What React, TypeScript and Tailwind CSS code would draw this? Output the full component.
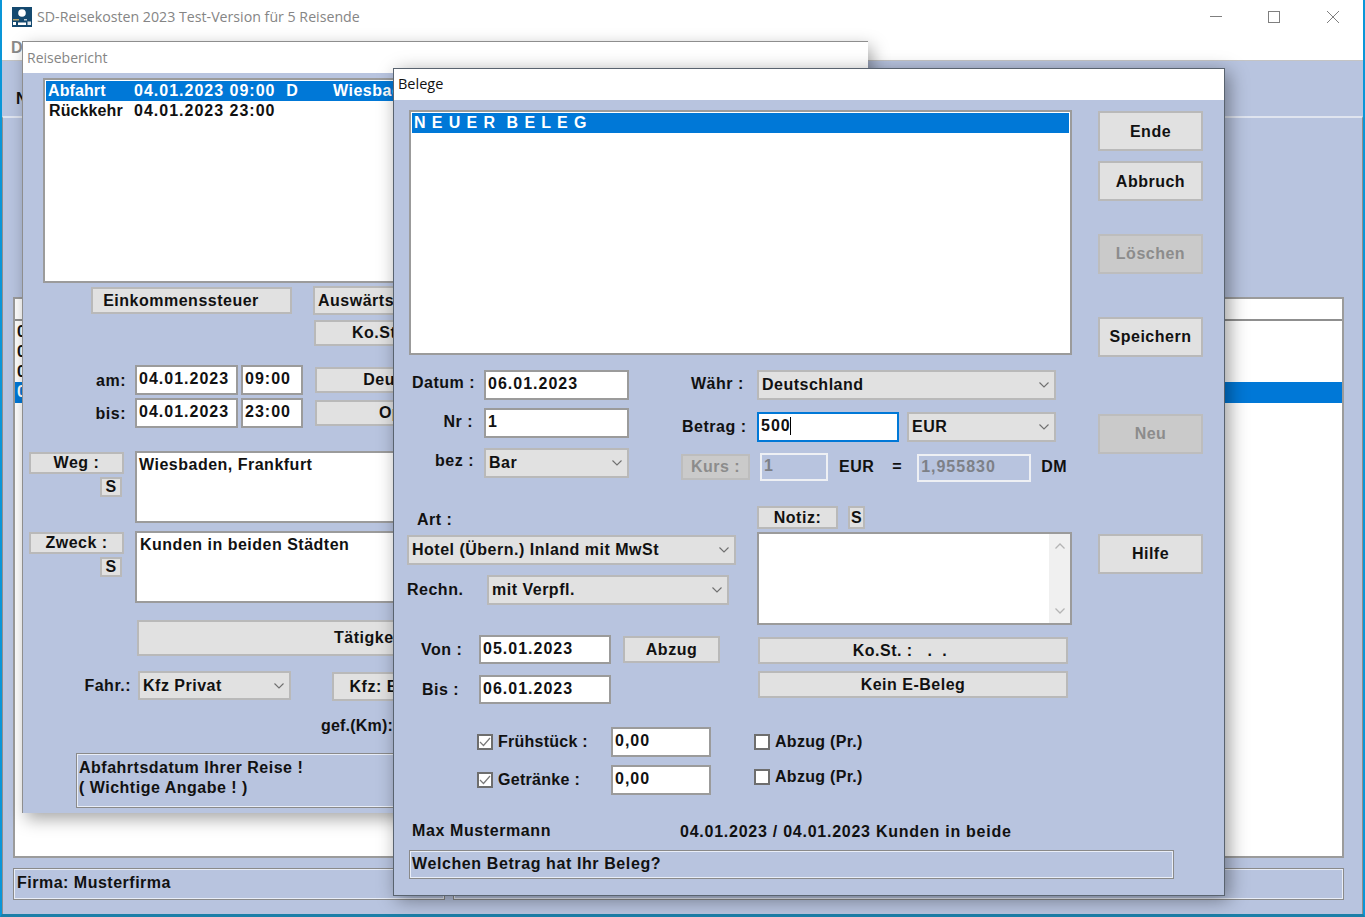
import React from 'react';
import clsx from 'clsx';

const Btn = ({ label, className, disabled, left }: { label: string; className?: string; disabled?: boolean; left?: boolean }) => (
  <button
    className={clsx(
      'flex shrink-0 items-center whitespace-pre border-2',
      left ? 'justify-start pl-[3px]' : 'justify-center',
      disabled ? 'border-[#bdbdbd] bg-[#cacaca] text-[#8c8c8c]' : 'border-[#b9b9b9] bg-[#e1e1e1] text-[#111]',
      className,
    )}
  >
    {label}
  </button>
);

const Field = ({ value, className, caret, disabled }: { value?: string; className?: string; caret?: boolean; disabled?: boolean }) => (
  <div
    className={clsx(
      'flex shrink-0 items-center whitespace-nowrap border-2 px-[2px] pb-[2px] tracking-[1px]',
      caret ? 'border-[#0078d7] bg-white' : disabled ? 'border-[#eef0f4] bg-[#b8c4df] text-[#7d8087]' : 'border-[#9b9b9b] bg-white',
      className,
    )}
  >
    {value}
    {caret && <span className="ml-[-1px] h-[18px] w-px bg-black" />}
  </div>
);

const Chevron = () => (
  <svg width="10" height="6" viewBox="0 0 10 6" fill="none" className="shrink-0">
    <path d="M0.5 0.5 L5 5 L9.5 0.5" stroke="#6f6f6f" strokeWidth="1.1" />
  </svg>
);

const Dropdown = ({ value, className }: { value: string; className?: string }) => (
  <div className={clsx('flex shrink-0 items-center justify-between whitespace-nowrap border-2 border-[#b9b9b9] bg-[#e1e1e1] pl-[3px] pr-[5px]', className)}>
    <span>{value}</span>
    <Chevron />
  </div>
);

const Check = ({ checked }: { checked?: boolean }) => (
  <div className="flex h-[16px] w-[16px] shrink-0 items-center justify-center border-2 border-[#6e6e6e] bg-white">
    {checked && (
      <svg width="12" height="10" viewBox="0 0 12 10" fill="none">
        <path d="M1 5 L4.5 8.5 L11 1" stroke="#7a7a7a" strokeWidth="1.2" />
      </svg>
    )}
  </div>
);

const StatusBox = ({ children, className }: { children: React.ReactNode; className?: string }) => (
  <div className={clsx('border border-[#8a8a8a] px-[2px] shadow-[inset_0_0_0_1px_#e9eef8]', className)}>{children}</div>
);

const WinTitle = ({ label, active }: { label: string; active?: boolean }) => (
  <div
    className={clsx(
      "flex h-[31px] shrink-0 items-center bg-white px-[4px] font-['Open_Sans',sans-serif] font-normal tracking-normal",
      active ? 'pb-[2px] text-[14.5px] text-[#111]' : 'text-[14px] text-[#858585]',
    )}
  >
    {label}
  </div>
);

const Logo = () => (
  <svg width="20" height="20" viewBox="0 0 20 20" className="shrink-0">
    <rect width="20" height="20" fill="#14496f" />
    <circle cx="10" cy="6" r="3.8" fill="#fff" />
    <rect x="1" y="12" width="6" height="1.5" fill="#b9a66a" />
    <rect x="12" y="12" width="3" height="1.5" fill="#b9c7d2" />
    <rect x="1" y="15" width="3" height="3" fill="#fff" />
    <rect x="6" y="15.5" width="8" height="2.5" fill="#fff" />
    <rect x="15.5" y="14.5" width="3.5" height="3.5" fill="#dfe6ec" />
  </svg>
);

const Reisebericht = () => (
  <div className="absolute left-[22px] top-[41px] flex h-[772px] w-[846px] flex-col border-l border-t border-[#8e8e8e] bg-[#b8c4df] shadow-[4px_6px_16px_rgba(0,0,0,0.35)]">
    <WinTitle label="Reisebericht" />
    <div className="flex flex-col pl-[20px] pt-[5px]">
      <div className="h-[205px] w-[780px] shrink-0 border-2 border-[#9b9b9b] bg-white p-[1px] leading-[20px]">
        <div className="flex h-[20px] whitespace-pre bg-[#0078d7] pl-[2px] text-white">
          <span className="w-[86px] tracking-[0.1px]">Abfahrt</span>
          <span className="w-[199px] tracking-[1px]">04.01.2023 09:00  D</span>
          <span className="tracking-[0.5px]">Wiesbaden, Frankfurt</span>
        </div>
        <div className="flex h-[20px] whitespace-pre pl-[3px]">
          <span className="w-[85px] tracking-[0.1px]">Rückkehr</span>
          <span className="tracking-[1px]">04.01.2023 23:00</span>
        </div>
      </div>

      <div className="mt-[3px] flex items-start">
        <Btn label="Einkommenssteuer" className="ml-[48px] mt-[1px] h-[27px] w-[201px] pr-[21px]" />
        <Btn label="Auswärtstätigkeit" left className="ml-[21px] h-[29px] w-[200px]" />
      </div>
      <Btn label="Ko.St. :" className="ml-[271px] mt-[5px] h-[26px] w-[136px]" />

      <div className="mt-[19px] flex items-start">
        <span className="flex h-[30px] w-[83px] items-center justify-end pt-[2px]">am:</span>
        <Field value="04.01.2023" className="ml-[9px] h-[30px] w-[103px]" />
        <Field value="09:00" className="ml-[3px] h-[30px] w-[62px]" />
        <Btn label="Deutschland" className="ml-[12px] mt-[2px] h-[26px] w-[198px]" />
      </div>
      <div className="mt-[3px] flex items-start">
        <span className="flex h-[30px] w-[83px] items-center justify-end pt-[2px]">bis:</span>
        <Field value="04.01.2023" className="ml-[9px] h-[30px] w-[103px]" />
        <Field value="23:00" className="ml-[3px] h-[30px] w-[62px]" />
        <Btn label="Optionen" className="ml-[12px] mt-[2px] h-[26px] w-[202px]" />
      </div>

      <div className="mt-[23px] flex items-start">
        <div className="ml-[-14px] flex w-[95px] flex-col items-end pt-[1px]">
          <Btn label="Weg :" className="h-[22px] w-[95px]" />
          <Btn label="S" className="mr-[2px] mt-[3px] h-[20px] w-[22px]" />
        </div>
        <div className="ml-[11px] h-[72px] w-[500px] border-2 border-[#9b9b9b] bg-white pl-[2px] leading-[24px]">Wiesbaden, Frankfurt</div>
      </div>
      <div className="mt-[8px] flex items-start">
        <div className="ml-[-14px] flex w-[95px] flex-col items-end pt-[1px]">
          <Btn label="Zweck :" className="h-[22px] w-[95px]" />
          <Btn label="S" className="mr-[2px] mt-[3px] h-[20px] w-[22px]" />
        </div>
        <div className="ml-[11px] h-[72px] w-[500px] border-2 border-[#9b9b9b] bg-white pl-[3px] leading-[24px]">Kunden in beiden Städten</div>
      </div>

      <Btn label="Tätigkeiten" className="ml-[94px] mt-[17px] h-[36px] w-[484px]" />

      <div className="mt-[15px] flex items-start">
        <span className="flex h-[29px] w-[88px] items-center justify-end">Fahr.:</span>
        <Dropdown value="Kfz Privat" className="ml-[7px] h-[29px] w-[153px]" />
        <Btn label="Kfz: Einstellung" className="ml-[41px] mt-[1px] h-[29px] w-[164px]" />
      </div>
      <span className="ml-[278px] mt-[15px] leading-[20px] tracking-[0.2px]">gef.(Km):</span>
      <StatusBox className="ml-[33px] mt-[17px] h-[55px] w-[500px] pt-[4px] leading-[20px]">
        <div>Abfahrtsdatum Ihrer Reise !</div>
        <div>( Wichtige Angabe ! )</div>
      </StatusBox>
    </div>
  </div>
);

const Belege = () => (
  <div className="absolute left-[393px] top-[68px] flex h-[828px] w-[832px] flex-col border border-[#59636f] bg-[#b8c4df] shadow-[4px_4px_18px_rgba(0,0,0,0.4)]">
    <WinTitle label="Belege" active />
    <div className="flex flex-col pl-[15px] pt-[10px]">
      <div className="flex items-start">
        <div className="flex w-[689px] flex-col">
          <div className="h-[245px] w-[663px] shrink-0 border-2 border-[#9b9b9b] bg-white p-[1px]">
            <div className="flex h-[20px] items-center whitespace-pre bg-[#0078d7] pl-[2px] tracking-[0.9px] text-white">N E U E R  B E L E G</div>
          </div>

          <div className="mt-[15px] flex items-start whitespace-nowrap">
            <div className="flex w-[220px] flex-col">
              <div className="flex items-center justify-end gap-[9px]">
                <span className="pb-[4px]">Datum :</span>
                <Field value="06.01.2023" className="h-[30px] w-[145px]" />
              </div>
              <div className="mt-[8px] flex items-center justify-end gap-[11px]">
                <span className="pb-[3px]">Nr :</span>
                <Field value="1" className="h-[30px] w-[145px]" />
              </div>
              <div className="mt-[10px] flex items-center justify-end gap-[10px]">
                <span className="pb-[5px]">bez :</span>
                <Dropdown value="Bar" className="h-[30px] w-[145px]" />
              </div>
            </div>
            <div className="flex flex-1 flex-col">
              <div className="flex items-center">
                <span className="ml-[62px] w-[66px] pb-[3px]">Währ :</span>
                <Dropdown value="Deutschland" className="h-[30px] w-[299px]" />
              </div>
              <div className="mt-[12px] flex items-center">
                <span className="ml-[53px] w-[75px]">Betrag :</span>
                <Field value="500" caret className="h-[30px] w-[142px]" />
                <Dropdown value="EUR" className="ml-[8px] h-[30px] w-[149px]" />
              </div>
              <div className="mt-[9px] flex items-center">
                <Btn label="Kurs :" disabled className="ml-[52px] h-[26px] w-[69px]" />
                <Field value="1" disabled className="ml-[10px] h-[28px] w-[68px]" />
                <span className="ml-[11px]">EUR</span>
                <span className="ml-[18px]">=</span>
                <Field value="1,955830" disabled className="ml-[15px] mt-[3px] h-[28px] w-[114px]" />
                <span className="ml-[10px]">DM</span>
              </div>
            </div>
          </div>

          <div className="mt-[24px] flex items-start whitespace-nowrap">
            <div className="ml-[-2px] flex w-[350px] flex-col">
              <span className="flex h-[29px] items-center pb-[2px] pl-[10px]">Art :</span>
              <Dropdown value="Hotel (Übern.) Inland mit MwSt" className="h-[30px] w-[329px]" />
              <div className="mt-[10px] flex items-center">
                <span className="w-[80px]">Rechn.</span>
                <Dropdown value="mit Verpfl." className="h-[30px] w-[242px]" />
              </div>
            </div>
            <div className="flex flex-col">
              <div className="flex gap-[10px]">
                <Btn label="Notiz:" className="h-[23px] w-[81px]" />
                <Btn label="S" className="h-[23px] w-[17px]" />
              </div>
              <div className="mt-[3px] flex h-[93px] w-[315px] justify-end border-2 border-[#9b9b9b] bg-white">
                <div className="flex w-[21px] flex-col items-center justify-between bg-[#f0f0f0] py-[9px]">
                  <svg width="10" height="6" viewBox="0 0 10 6" fill="none"><path d="M0.5 5.5 L5 1 L9.5 5.5" stroke="#b5b5b5" strokeWidth="1.3" /></svg>
                  <svg width="10" height="6" viewBox="0 0 10 6" fill="none"><path d="M0.5 0.5 L5 5 L9.5 0.5" stroke="#b5b5b5" strokeWidth="1.3" /></svg>
                </div>
              </div>
            </div>
          </div>
        </div>

        <div className="flex w-[105px] flex-col pt-[1px]">
          <Btn label="Ende" className="h-[40px] w-[105px] pt-[2px]" />
          <Btn label="Abbruch" className="mt-[10px] h-[40px] w-[105px] pt-[2px]" />
          <Btn label="Löschen" disabled className="mt-[33px] h-[40px] w-[105px]" />
          <Btn label="Speichern" className="mt-[43px] h-[40px] w-[105px]" />
          <Btn label="Neu" disabled className="mt-[57px] h-[40px] w-[105px]" />
          <Btn label="Hilfe" className="mt-[80px] h-[40px] w-[105px]" />
        </div>
      </div>

      <div className="mt-[10px] flex items-start whitespace-nowrap">
        <div className="flex w-[349px] flex-col">
          <div className="flex items-center">
            <span className="w-[70px] pl-[12px] pt-[1px]">Von :</span>
            <Field value="05.01.2023" className="h-[29px] w-[132px]" />
            <Btn label="Abzug" className="ml-[12px] h-[27px] w-[97px]" />
          </div>
          <div className="mt-[11px] flex items-center">
            <span className="w-[70px] pl-[13px] pt-[1px]">Bis :</span>
            <Field value="06.01.2023" className="h-[29px] w-[132px]" />
          </div>
        </div>
        <div className="flex flex-col pt-[2px]">
          <Btn label="Ko.St. :   .  ." className="h-[27px] w-[310px] pr-[26px]" />
          <Btn label="Kein E-Beleg" className="mt-[7px] h-[27px] w-[310px]" />
        </div>
      </div>

      <div className="ml-[68px] mt-[23px] flex items-center whitespace-nowrap">
        <Check checked />
        <span className="ml-[5px] w-[113px] pb-[1px] tracking-[0.25px]">Frühstück :</span>
        <Field value="0,00" className="h-[30px] w-[100px]" />
        <div className="ml-[43px] flex items-center gap-[5px] tracking-[0.3px]">
          <Check />
          <span>Abzug (Pr.)</span>
        </div>
      </div>
      <div className="ml-[68px] mt-[8px] flex items-center whitespace-nowrap">
        <Check checked />
        <span className="ml-[5px] w-[113px] pb-[1px] tracking-[0.3px]">Getränke :</span>
        <Field value="0,00" className="h-[30px] w-[100px]" />
        <div className="mb-[6px] ml-[43px] flex items-center gap-[5px] tracking-[0.3px]">
          <Check />
          <span>Abzug (Pr.)</span>
        </div>
      </div>

      <div className="mt-[26px] flex h-[20px] items-center whitespace-nowrap">
        <span className="ml-[3px] w-[268px] tracking-[0.6px]">Max Mustermann</span>
        <span className="pt-[2px] tracking-[0.75px]">04.01.2023 / 04.01.2023 Kunden in beide</span>
      </div>
      <StatusBox className="mt-[9px] h-[29px] w-[765px] leading-[26px] tracking-[0.6px]">Welchen Betrag hat Ihr Beleg?</StatusBox>
    </div>
  </div>
);

export default function App() {
  return (
    <div className="relative h-[917px] w-[1365px] overflow-hidden bg-[#b8c4df] font-['Liberation_Sans',sans-serif] text-[16px] font-bold tracking-[0.5px] text-[#111]">
      {/* main window */}
      <div className="flex h-full flex-col border-x-2 border-b-[3px] border-x-[#0a96d8] border-b-[#1c7fa8]">
        <div className="h-[61px] shrink-0 border-b border-[#c4c4c4] bg-white">
          <div className="flex h-[33px] items-center pl-[10px]">
            <Logo />
            <span className="ml-[5px] font-['Open_Sans',sans-serif] text-[14.2px] font-normal tracking-normal text-[#858585]">SD-Reisekosten 2023 Test-Version für 5 Reisende</span>
            <div className="ml-auto flex items-center">
              <div className="mr-[46px] h-px w-[12px] bg-[#7f7f7f]" />
              <div className="mr-[47px] h-[12px] w-[12px] border border-[#7f7f7f]" />
              <svg width="12" height="12" viewBox="0 0 12 12" className="mr-[24px]">
                <path d="M0 0 L12 12 M12 0 L0 12" stroke="#7f7f7f" strokeWidth="1" />
              </svg>
            </div>
          </div>
          <div className="pl-[9px] leading-[30px] text-[#8a8a8a]">Datei</div>
        </div>
        <div className="flex h-[55px] shrink-0 items-end pb-[5px] pl-[14px]">Neu</div>
        <div className="flex flex-1 flex-col border-x border-t-2 border-l-[#8f8f8f] border-r-[#8f8f8f] border-t-[#dfe4ef] pb-[13px] pl-[10px] pr-[18px]">
          <div className="mt-[179px] flex h-[561px] shrink-0 flex-col border-2 border-[#9b9b9b] bg-white">
            <div className="h-[22px] shrink-0 border-b-2 border-[#8f8f8f]" />
            <div className="flex flex-col pt-[1px] leading-[20px]">
              <div className="h-[20px] pl-[2px]">04.01.2023</div>
              <div className="h-[20px] pl-[2px]">05.01.2023</div>
              <div className="h-[20px] pl-[2px]">06.01.2023</div>
              <div className="h-[21px] bg-[#0078d7] pl-[2px] text-white">07.01.2023</div>
            </div>
          </div>
          <div className="mt-[10px] flex h-[32px] shrink-0 gap-[8px]">
            <StatusBox className="w-[432px] pl-[3px] leading-[27px]">Firma: Musterfirma</StatusBox>
            <StatusBox className="flex-1">{''}</StatusBox>
          </div>
        </div>
      </div>
      <Reisebericht />
      <Belege />
    </div>
  );
}
